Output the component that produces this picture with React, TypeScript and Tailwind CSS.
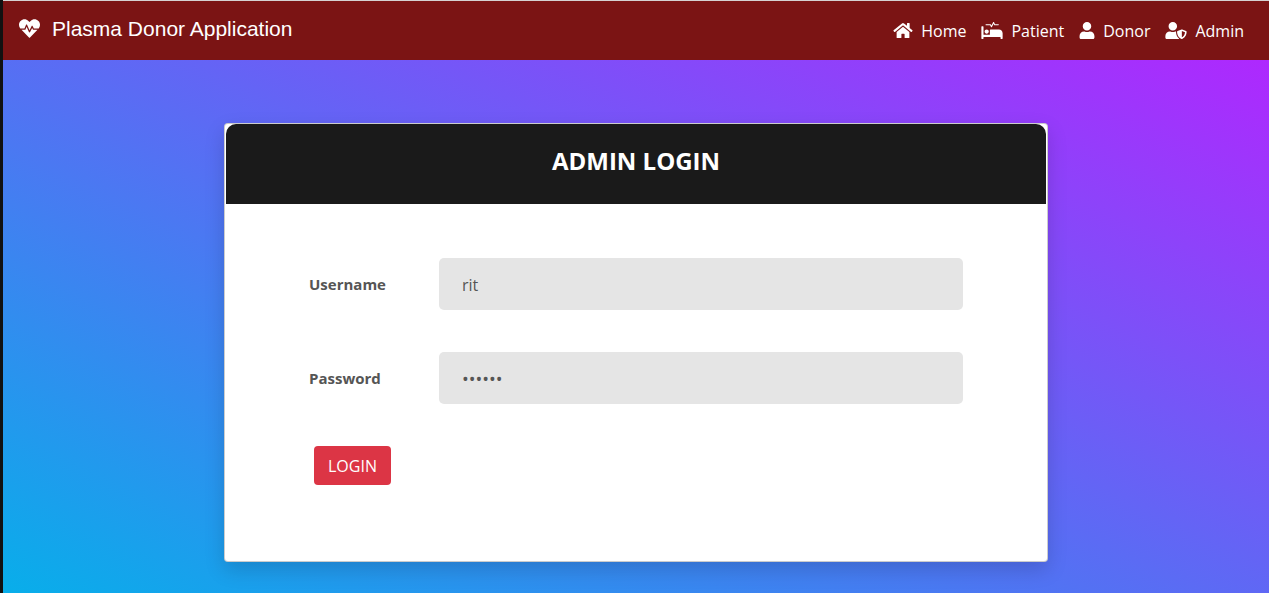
import type { IconType } from "react-icons";
import { FaHeartbeat, FaHome, FaProcedures, FaUser, FaUserShield } from "react-icons/fa";

type NavItem = { label: string; href: string; icon: IconType; iconClass: string };

const navItems: NavItem[] = [
  { label: "Home", href: "#home", icon: FaHome, iconClass: "h-[17px] w-5" },
  { label: "Patient", href: "#patient", icon: FaProcedures, iconClass: "h-[17px] w-[22px]" },
  { label: "Donor", href: "#donor", icon: FaUser, iconClass: "h-[17px] w-4" },
  { label: "Admin", href: "#admin", icon: FaUserShield, iconClass: "h-[17px] w-[22px]" },
];

function NavBar() {
  return (
    <header className="flex h-[60px] items-center justify-between border-t border-[#d6d2d2] bg-[#7b1414] pr-[25px] pb-1 pl-4 text-white">
      <a href="#top" className="flex items-center gap-3 font-['Liberation_Sans',Arial,sans-serif] text-[21px] leading-8">
        <FaHeartbeat className="h-[21px] w-[21px]" />
        Plasma Donor Application
      </a>
      <nav className="flex items-center gap-[15px] pt-1 text-base">
        {navItems.map(({ label, href, icon: Icon, iconClass }) => (
          <a key={label} href={href} className="flex items-center gap-2">
            <Icon className={iconClass} />
            {label}
          </a>
        ))}
      </nav>
    </header>
  );
}

type FieldProps = { id: string; label: string; type: string; value: string; sizeClass: string };

function Field({ id, label, type, value, sizeClass }: FieldProps) {
  return (
    <div className="flex items-center">
      <label htmlFor={id} className="w-[130px] shrink-0 text-[15px] font-bold text-[#555]">
        {label}
      </label>
      <input
        id={id}
        type={type}
        defaultValue={value}
        className={`h-[52px] min-w-0 flex-1 rounded-[5px] bg-[#e5e5e5] px-[23px] pt-0.5 text-[#555] outline-none ${sizeClass}`}
      />
    </div>
  );
}

export default function App() {
  return (
    <div className="min-h-screen border-l-[3px] border-[#111] bg-linear-to-tr/srgb from-[#08aeea] to-[#b721ff] font-['Open_Sans','Noto_Sans',sans-serif]">
      <NavBar />
      <main className="px-4 pt-[63px] pb-[31px]">
        <section className="mx-auto max-w-[824px] rounded-[4px] border border-black/20 bg-white shadow-[0_8px_20px_0_rgba(0,0,0,0.15)]">
          <div className="mx-px flex h-20 items-center justify-center rounded-t-[10px] bg-[#1a1a1a] pb-1.5">
            <h1 className="text-2xl font-bold text-white">ADMIN LOGIN</h1>
          </div>
          <form className="flex flex-col gap-[42px] px-[84px] pt-[54px] pb-[76px]" onSubmit={(e) => e.preventDefault()}>
            <Field id="username" label="Username" type="text" value="rit" sizeClass="text-base" />
            <Field id="password" label="Password" type="password" value="secret" sizeClass="text-lg" />
            <button type="submit" className="ml-[5px] h-[39px] self-start rounded-[4px] bg-[#dc3545] px-3.5 text-base text-white">
              LOGIN
            </button>
          </form>
        </section>
      </main>
    </div>
  );
}
